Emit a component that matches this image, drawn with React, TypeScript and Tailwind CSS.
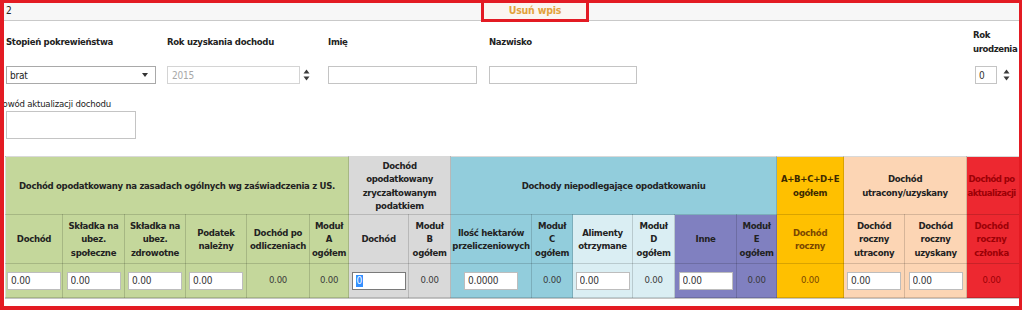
import React from "react";

const Spinner: React.FC = () => (
  <svg width="7" height="14" viewBox="0 0 7 14" className="shrink-0">
    <path d="M3.5 1.5L6.5 5.5H0.5Z" fill="#3a3a3a" />
    <path d="M3.5 12.5L6.5 8.5H0.5Z" fill="#3a3a3a" />
  </svg>
);

const Field: React.FC<{ label: React.ReactNode; children: React.ReactNode }> = ({ label, children }) => (
  <div className="flex w-[161px] flex-col">
    <div className="flex h-[30px] items-center font-bold tracking-[-0.3px] text-[#222]">{label}</div>
    <div className="mt-[9px] flex items-center">{children}</div>
  </div>
);

const cellInput =
  "h-[18px] w-[54px] border border-[#bdbdbd] bg-white px-[3px] text-left text-[10px] text-[#333] outline-none";

const hdr = "border border-black/15 font-bold leading-[13.5px] tracking-[-0.3px] text-center align-middle";
const dat = "border border-black/15 text-center align-middle font-normal text-[#3a3a3a]";

const lines = (parts: string[]) =>
  parts.map((p, i) => (
    <React.Fragment key={i}>
      {i > 0 && <br />}
      {p}
    </React.Fragment>
  ));

const widths = [57, 62, 61, 61, 63, 39, 60, 42, 81, 41, 60, 42, 62, 40, 67, 61, 62, 53];

const App: React.FC = () => {
  return (
    <div className="relative h-[310px] w-[1022px] overflow-hidden bg-white font-['DejaVu_Sans_Condensed','Liberation_Sans',sans-serif] text-[9.5px] tracking-[-0.2px] text-[#222]">
      {/* top bar */}
      <div className="flex h-[21px] border-b border-[#c9c9c9] bg-[#f7f7f7]">
        <div className="w-[481px] pl-[6px] pt-[5px] text-[10px] leading-[12px]">2</div>
        <div className="flex h-[22px] w-[108px] items-center justify-center border-[3px] border-[#e31b23] bg-[#fbf6f1] text-[10.5px] font-bold tracking-[-0.2px] text-[#e2a23c]">
          Usuń wpis
        </div>
      </div>

      {/* form */}
      <div className="flex pl-[6px] pt-[6px]">
        <Field label="Stopień pokrewieństwa">
          <div className="flex h-[18px] w-[150px] items-center justify-between border border-[#a9a9a9] bg-white pl-[3px] pr-[7px] text-[10px] text-[#222]">
            <span>brat</span>
            <svg width="6" height="4" viewBox="0 0 6 4">
              <path d="M0 0H6L3 4Z" fill="#333" />
            </svg>
          </div>
        </Field>
        <Field label="Rok uzyskania dochodu">
          <input
            readOnly
            disabled
            defaultValue="2015"
            className="h-[18px] w-[133px] border border-[#d4d4d4] bg-white px-[4px] text-[10px] text-[#a8a8a8]"
          />
          <div className="ml-[3px]">
            <Spinner />
          </div>
        </Field>
        <Field label="Imię">
          <input readOnly className="h-[18px] w-[149px] border border-[#c4c4c4] bg-white" />
        </Field>
        <Field label="Nazwisko">
          <input readOnly className="h-[18px] w-[148px] border border-[#c4c4c4] bg-white" />
        </Field>
        <div className="ml-[323px] flex w-[46px] flex-col">
          <div className="flex h-[30px] items-center font-bold leading-[14px] tracking-[-0.4px]">
            <span>{lines(["Rok", "urodzenia"])}</span>
          </div>
          <div className="mt-[9px] flex items-center">
            <input
              readOnly
              defaultValue="0"
              className="ml-[2px] h-[18px] w-[22px] border border-[#c4c4c4] bg-white px-[3px] text-[10px] text-[#333]"
            />
            <div className="ml-[6px]">
              <Spinner />
            </div>
          </div>
        </div>
      </div>

      {/* reason */}
      <div className="mt-[14px] ml-[-2px] leading-[12px] text-[#222]">Powód aktualizacji dochodu</div>
      <textarea
        readOnly
        className="ml-[6px] mt-[1px] block h-[28px] w-[130px] resize-none border border-[#c4c4c4] bg-white"
      />

      {/* table */}
      <table className="ml-[5px] mt-[17px] w-[1014px] table-fixed border-collapse">
        <colgroup>
          {widths.map((w, i) => (
            <col key={i} style={{ width: w }} />
          ))}
        </colgroup>
        <thead>
          <tr className="h-[58px]">
            <th colSpan={6} className={`${hdr} bg-[#c4d79b]`}>
              Dochód opodatkowany na zasadach ogólnych wg zaświadczenia z US.
            </th>
            <th colSpan={2} className={`${hdr} bg-[#d9d9d9]`}>
              {lines(["Dochód", "opodatkowany", "zryczałtowanym", "podatkiem"])}
            </th>
            <th colSpan={6} className={`${hdr} bg-[#92cddc]`}>
              Dochody niepodlegające opodatkowaniu
            </th>
            <th className={`${hdr} bg-[#ffc000] text-[#3d2a00]`}>{lines(["A+B+C+D+E", "ogółem"])}</th>
            <th colSpan={2} className={`${hdr} bg-[#fcd5b4]`}>
              {lines(["Dochód", "utracony/uzyskany"])}
            </th>
            <th className={`${hdr} bg-[#ed2830] pr-[3px] text-[#9c0006] tracking-[-0.55px]`}>
              {lines(["Dochód po", "aktualizacji"])}
            </th>
          </tr>
          <tr className="h-[49px]">
            <th className={`${hdr} bg-[#c4d79b]`}>Dochód</th>
            <th className={`${hdr} bg-[#c4d79b]`}>{lines(["Składka na", "ubez.", "społeczne"])}</th>
            <th className={`${hdr} bg-[#c4d79b]`}>{lines(["Składka na", "ubez.", "zdrowotne"])}</th>
            <th className={`${hdr} bg-[#c4d79b]`}>{lines(["Podatek", "należny"])}</th>
            <th className={`${hdr} bg-[#c4d79b]`}>{lines(["Dochód po", "odliczeniach"])}</th>
            <th className={`${hdr} bg-[#c4d79b]`}>{lines(["Moduł", "A", "ogółem"])}</th>
            <th className={`${hdr} bg-[#d9d9d9]`}>Dochód</th>
            <th className={`${hdr} bg-[#d9d9d9]`}>{lines(["Moduł", "B", "ogółem"])}</th>
            <th className={`${hdr} bg-[#92cddc]`}>{lines(["Ilość hektarów", "przeliczeniowych"])}</th>
            <th className={`${hdr} bg-[#92cddc]`}>{lines(["Moduł", "C", "ogółem"])}</th>
            <th className={`${hdr} bg-[#daeef3]`}>{lines(["Alimenty", "otrzymane"])}</th>
            <th className={`${hdr} bg-[#daeef3]`}>{lines(["Moduł", "D", "ogółem"])}</th>
            <th className={`${hdr} bg-[#8080c0]`}>Inne</th>
            <th className={`${hdr} bg-[#8080c0]`}>{lines(["Moduł", "E", "ogółem"])}</th>
            <th className={`${hdr} bg-[#ffc000] text-[#7a4600]`}>{lines(["Dochód", "roczny"])}</th>
            <th className={`${hdr} bg-[#fcd5b4]`}>{lines(["Dochód", "roczny", "utracony"])}</th>
            <th className={`${hdr} bg-[#fcd5b4]`}>{lines(["Dochód", "roczny", "uzyskany"])}</th>
            <th className={`${hdr} bg-[#ed2830] pr-[3px] text-[#9c0006]`}>{lines(["Dochód", "roczny", "członka"])}</th>
          </tr>
        </thead>
        <tbody>
          <tr className="h-[34px]">
            <td className={`${dat} bg-[#c4d79b]`}>
              <input readOnly defaultValue="0.00" className={cellInput} />
            </td>
            <td className={`${dat} bg-[#c4d79b]`}>
              <input readOnly defaultValue="0.00" className={cellInput} />
            </td>
            <td className={`${dat} bg-[#c4d79b]`}>
              <input readOnly defaultValue="0.00" className={cellInput} />
            </td>
            <td className={`${dat} bg-[#c4d79b]`}>
              <input readOnly defaultValue="0.00" className={cellInput} />
            </td>
            <td className={`${dat} bg-[#c4d79b]`}>0.00</td>
            <td className={`${dat} bg-[#c4d79b]`}>0.00</td>
            <td className={`${dat} bg-[#d9d9d9]`}>
              <div className="mx-auto flex h-[18px] w-[54px] items-center border border-[#7a7a7a] bg-white pl-[3px] text-[10px]">
                <span className="bg-[#3390ff] px-px leading-[12px] text-white">0</span>
              </div>
            </td>
            <td className={`${dat} bg-[#d9d9d9]`}>0.00</td>
            <td className={`${dat} bg-[#92cddc]`}>
              <input readOnly defaultValue="0.0000" className={cellInput} />
            </td>
            <td className={`${dat} bg-[#92cddc]`}>0.00</td>
            <td className={`${dat} bg-[#daeef3]`}>
              <input readOnly defaultValue="0.00" className={cellInput} />
            </td>
            <td className={`${dat} bg-[#daeef3]`}>0.00</td>
            <td className={`${dat} bg-[#8080c0]`}>
              <input readOnly defaultValue="0.00" className={cellInput} />
            </td>
            <td className={`${dat} bg-[#8080c0]`}>0.00</td>
            <td className={`${dat} bg-[#ffc000] text-[#7a4600]`}>0.00</td>
            <td className={`${dat} bg-[#fcd5b4]`}>
              <input readOnly defaultValue="0.00" className={cellInput} />
            </td>
            <td className={`${dat} bg-[#fcd5b4]`}>
              <input readOnly defaultValue="0.00" className={cellInput} />
            </td>
            <td className={`${dat} bg-[#ed2830] pr-[3px] text-[#9c0006]`}>0.00</td>
          </tr>
        </tbody>
      </table>
      <div className="ml-[5px] w-[1014px] border-t border-[#c4c4c4]" />

      {/* red highlight frame over the panel */}
      <div className="pointer-events-none absolute inset-0 border-b-[4px] border-l-[4px] border-r-[3px] border-t-[3px] border-[#e31b23]" />
    </div>
  );
};

export default App;
